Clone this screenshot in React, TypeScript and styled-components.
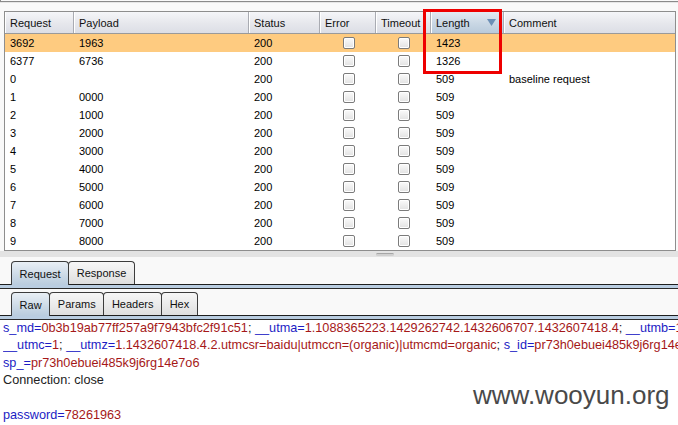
import React from "react";
import styled, { createGlobalStyle, css } from "styled-components";

const Global = createGlobalStyle`
  html, body { margin: 0; padding: 0; }
  body {
    background: #f9f9f9;
    font-family: "Liberation Sans", Arial, sans-serif;
    overflow: hidden;
  }
  #root { width: 678px; height: 425px; }
`;

const Page = styled.div`
  position: relative;
  width: 678px;
  height: 425px;
  display: flex;
  flex-direction: column;
  background: #f9f9f9;
  overflow: hidden;
`;

const TopStrip = styled.div`
  height: 1px;
  border-left: 1px solid #8a8a8a;
  border-bottom: 1px solid #8a8a8a;
  box-shadow: 0 1px 0 #e6e6e6;
`;

const ResultsArea = styled.div`
  position: relative;
  padding: 9px 2px 0 4px;
`;

const Table = styled.div`
  border: 1px solid #8e8e8e;
  background: #ffffff;
`;

const cols = "69px 175px 71px 56px 55px 73px 1fr";

const HeaderRow = styled.div`
  display: grid;
  grid-template-columns: ${cols};
  height: 21px;
  border-bottom: 1px solid #9a9a9a;
`;

const HeaderCell = styled.div<{ $sorted?: boolean; $last?: boolean }>`
  display: flex;
  align-items: center;
  justify-content: space-between;
  padding: 0 7px 0 5px;
  font-size: 11px;
  color: #111;
  background: linear-gradient(#f5f6f9, #e6e7ec 55%, #dcdee6);
  border-right: 1px solid #a9abb2;
  box-shadow: inset 1px 0 0 #ffffff;
  ${(p) =>
    p.$sorted &&
    css`
      background: linear-gradient(#e3eaf2, #c9d7e4 55%, #b9cadb);
    `}
  ${(p) =>
    p.$last &&
    css`
      border-right: none;
    `}
`;

const Row = styled.div<{ $hl?: boolean }>`
  display: grid;
  grid-template-columns: ${cols};
  height: 18px;
  background: ${(p) => (p.$hl ? "#fecb80" : "#ffffff")};
`;

const Cell = styled.div<{ $center?: boolean }>`
  display: flex;
  align-items: center;
  justify-content: ${(p) => (p.$center ? "center" : "flex-start")};
  padding-left: ${(p) => (p.$center ? "0" : "5px")};
  font-size: 11px;
  color: #000;
  white-space: nowrap;
  overflow: hidden;
`;

const Check = styled.span`
  display: block;
  width: 10px;
  height: 10px;
  border: 1px solid #7b7b7b;
  border-radius: 2px;
  background: linear-gradient(#fbfbfb, #e2e2e2);
  box-shadow: inset 0 0 0 1px #ffffff;
  margin-left: 1px;
`;

const RedBox = styled.div`
  position: absolute;
  left: 423px;
  top: 7px;
  width: 73px;
  height: 59px;
  border: 3px solid #ee0000;
  pointer-events: none;
`;

const Splitter = styled.div`
  height: 6px;
  background: #e3e3e3;
  display: flex;
  justify-content: center;
  padding-left: 92px;
  box-sizing: border-box;
`;

const Grip = styled.div`
  width: 18px;
  height: 2px;
  margin-top: 2px;
  border-top: 1px solid #a6a6a6;
  border-radius: 2px;
  background: #d0d0d0;
`;

const TabBar = styled.div<{ $top: number }>`
  display: flex;
  padding: ${(p) => p.$top}px 0 0 11px;
  background: #f9f9f9;
`;

const Tab = styled.div<{ $active?: boolean; $h: number }>`
  height: ${(p) => p.$h}px;
  padding: 0 7.6px;
  display: flex;
  align-items: center;
  font-size: 11px;
  color: #111;
  border: 1px solid #3c3c3c;
  border-bottom: none;
  border-radius: 4px 4px 0 0;
  margin-left: -1px;
  background: linear-gradient(#f7f7f7, #e9e9e9 60%, #dedede);
  ${(p) =>
    p.$active &&
    css`
      background: linear-gradient(#e9eff5, #cbd9e6 60%, #b9ccde);
      margin-bottom: -1px;
      height: ${p.$h + 1}px;
      position: relative;
      z-index: 1;
    `}
  &:first-child { margin-left: 0; }
`;

const Band = styled.div`
  height: 3px;
  border-top: 1px solid #1e1e1e;
  border-bottom: 1px solid #2a2a2a;
  background: #b9cde1;
`;

const Gap = styled.div`
  height: 3px;
  background: #f9f9f9;
`;

const Editor = styled.div`
  flex: 1;
  background: #ffffff;
  padding: 0 0 0 3px;
  font-size: 12.7px;
  line-height: 17.4px;
  color: #222;
`;

const Line = styled.div`
  white-space: nowrap;
  overflow: hidden;
  height: 17.4px;
`;

const Name = styled.span`
  color: #1c1cc4;
`;

const Val = styled.span`
  color: #a51818;
`;

const Watermark = styled.div`
  position: absolute;
  left: 473px;
  top: 382px;
  font-size: 26px;
  line-height: 26px;
  color: #3a3a3a;
  font-family: "Liberation Sans", Arial, sans-serif;
  opacity: 0.92;
`;

const SortArrow = () => (
  <svg width="9" height="7" viewBox="0 0 9 7">
    <polygon points="0,0 9,0 4.5,7" fill="#6c8fb6" />
  </svg>
);

const headers = ["Request", "Payload", "Status", "Error", "Timeout", "Length", "Comment"];

const rows: [string, string, string, string, string][] = [
  ["3692", "1963", "200", "1423", ""],
  ["6377", "6736", "200", "1326", ""],
  ["0", "", "200", "509", "baseline request"],
  ["1", "0000", "200", "509", ""],
  ["2", "1000", "200", "509", ""],
  ["3", "2000", "200", "509", ""],
  ["4", "3000", "200", "509", ""],
  ["5", "4000", "200", "509", ""],
  ["6", "5000", "200", "509", ""],
  ["7", "6000", "200", "509", ""],
  ["8", "7000", "200", "509", ""],
  ["9", "8000", "200", "509", ""],
];

export default function App() {
  return (
    <>
      <Global />
      <Page>
        <TopStrip />
        <ResultsArea>
          <Table>
            <HeaderRow>
              {headers.map((h, i) => (
                <HeaderCell key={h} $sorted={h === "Length"} $last={i === headers.length - 1}>
                  <span>{h}</span>
                  {h === "Length" && <SortArrow />}
                </HeaderCell>
              ))}
            </HeaderRow>
            {rows.map((r, i) => (
              <Row key={i} $hl={i === 0}>
                <Cell>{r[0]}</Cell>
                <Cell>{r[1]}</Cell>
                <Cell>{r[2]}</Cell>
                <Cell $center>
                  <Check />
                </Cell>
                <Cell $center>
                  <Check />
                </Cell>
                <Cell>{r[3]}</Cell>
                <Cell>{r[4]}</Cell>
              </Row>
            ))}
          </Table>
          <RedBox />
        </ResultsArea>
        <Splitter>
          <Grip />
        </Splitter>
        <TabBar $top={4}>
          <Tab $h={22} $active>Request</Tab>
          <Tab $h={22}>Response</Tab>
        </TabBar>
        <Band />
        <Gap />
        <TabBar $top={0}>
          <Tab $h={22} $active>Raw</Tab>
          <Tab $h={22}>Params</Tab>
          <Tab $h={22}>Headers</Tab>
          <Tab $h={22}>Hex</Tab>
        </TabBar>
        <Band />
        <Editor>
          <Line>
            <Name>s_md=</Name>
            <Val>0b3b19ab77ff257a9f7943bfc2f91c51</Val>; <Name>__utma=</Name>
            <Val>1.1088365223.1429262742.1432606707.1432607418.4</Val>; <Name>__utmb=</Name>
            <Val>1.10.10.1432607418</Val>
          </Line>
          <Line>
            <Name>__utmc=</Name>
            <Val>1</Val>; <Name>__utmz=</Name>
            <Val>1.1432607418.4.2.utmcsr=baidu|utmccn=(organic)|utmcmd=organic</Val>;{" "}
            <Name>s_id=</Name>
            <Val>pr73h0ebuei485k9j6rg14e7o6</Val>
          </Line>
          <Line>
            <Name>sp_=</Name>
            <Val>pr73h0ebuei485k9j6rg14e7o6</Val>
          </Line>
          <Line>Connection: close</Line>
          <Line />
          <Line>
            <Name>password=</Name>
            <Val>78261963</Val>
          </Line>
        </Editor>
        <Watermark>www.wooyun.org</Watermark>
      </Page>
    </>
  );
}
